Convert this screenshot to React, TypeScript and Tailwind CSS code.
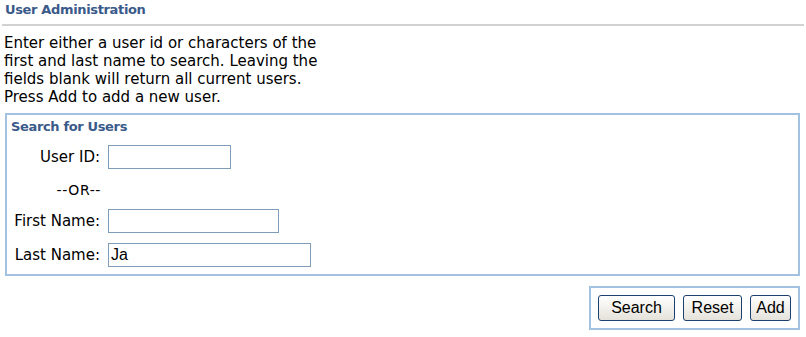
import { useState } from "react";

const labelCls = "w-[93px] shrink-0 text-right text-[15px] leading-[18px] text-black";
const inputCls =
  "h-[24px] border border-[#7f9db9] bg-white px-[2px] text-[16px] leading-[20px] text-black outline-none font-['Liberation_Sans',Arial,sans-serif]";
const buttonCls =
  "h-[26px] rounded-[3px] border border-[#1c3f6e] bg-linear-to-b from-white to-[#e4e2da] text-center text-[16px] leading-[22px] text-black font-['Liberation_Sans',Arial,sans-serif]";
const headingCls = "text-[13px] font-bold leading-[15px] tracking-[-0.35px] text-[#3a5a8a]";

function FieldRow({ label, width, value, onChange, className }: {
  label: string;
  width: string;
  value: string;
  onChange: (v: string) => void;
  className?: string;
}) {
  return (
    <div className={"flex h-[24px] items-center " + (className ?? "")}>
      <span className={labelCls}>{label}</span>
      <input
        type="text"
        value={value}
        onChange={(e) => onChange(e.target.value)}
        className={inputCls + " ml-[8px] " + width}
      />
    </div>
  );
}

export default function App() {
  const [userId, setUserId] = useState("");
  const [firstName, setFirstName] = useState("");
  const [lastName, setLastName] = useState("Ja");

  return (
    <div className="w-[806px] h-[337px] bg-white font-['DejaVu_Sans',Verdana,sans-serif] text-black">
      <h2 className={"pl-[5px] pt-[2px] " + headingCls}>User Administration</h2>
      <div className="mx-[2px] mt-[7px] h-[2px] bg-[#d2d2d2]" />

      <p className="mt-[8px] pl-[4px] text-[15px] leading-[18px]">
        Enter either a user id or characters of the
        <br />
        first and last name to search. Leaving the
        <br />
        fields blank will return all current users.
        <br />
        Press Add to add a new user.
      </p>

      <div className="ml-[5px] mr-[6px] mt-[7px] border-2 border-[#a2c2df] pb-[7px]">
        <h3 className={"pl-[4px] pt-[4px] " + headingCls}>Search for Users</h3>

        <FieldRow className="mt-[11px]" label="User ID:" width="w-[123px]" value={userId} onChange={setUserId} />

        <div className="mt-[9px] flex h-[24px] items-center">
          <span className="w-[94px] shrink-0 text-right text-[14px] leading-[18px] tracking-[0.6px]">--OR--</span>
        </div>

        <FieldRow className="mt-[7px]" label="First Name:" width="w-[171px]" value={firstName} onChange={setFirstName} />
        <FieldRow className="mt-[10px]" label="Last Name:" width="w-[203px]" value={lastName} onChange={setLastName} />
      </div>

      <div className="flex justify-end">
        <div className="mr-[6px] mt-[10px] flex gap-[8px] border-2 border-[#a2c2df] px-[7px] py-[7px]">
          <button type="button" className={buttonCls + " w-[77px]"}>Search</button>
          <button type="button" className={buttonCls + " w-[59px]"}>Reset</button>
          <button type="button" className={buttonCls + " w-[41px]"}>Add</button>
        </div>
      </div>
    </div>
  );
}
